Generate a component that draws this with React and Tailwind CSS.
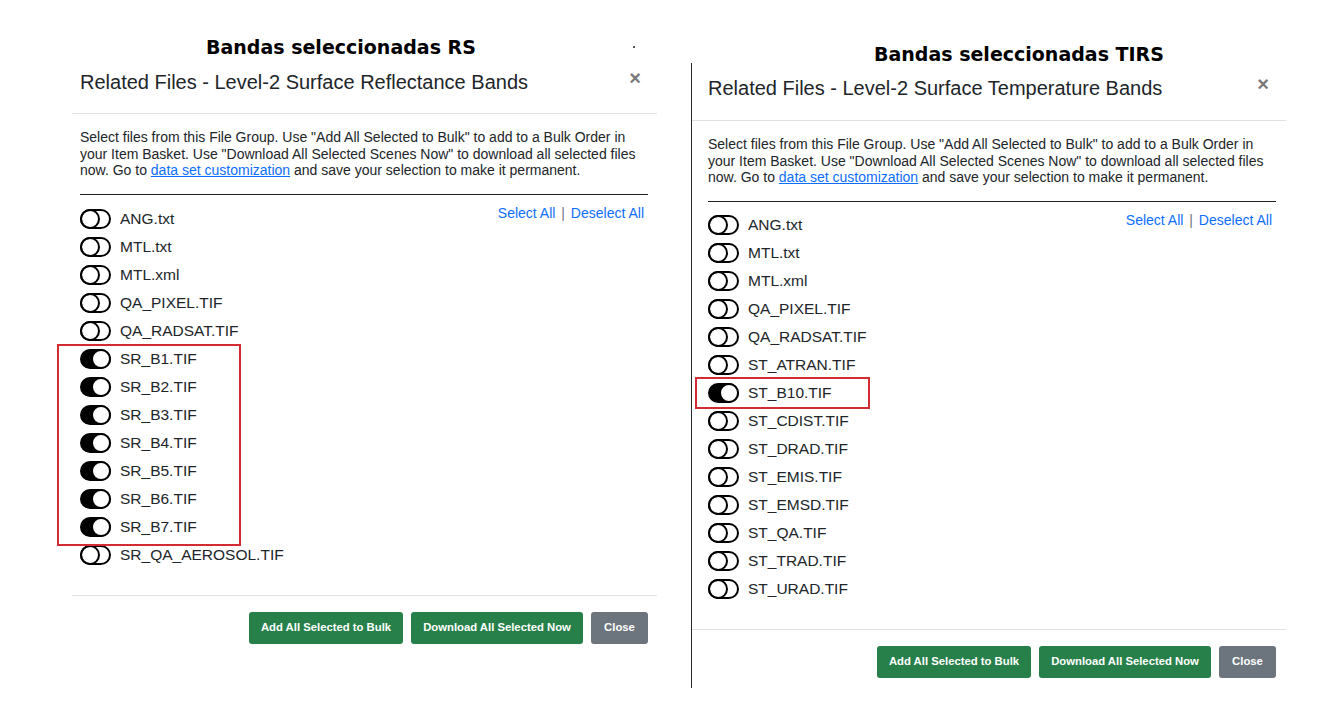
import React from "react";

const SANS = { fontFamily: '"Liberation Sans", Arial, sans-serif' };

function Toggle({ on }) {
  return on ? (
    <div className="relative w-[31px] h-[20px] rounded-full bg-black border-2 border-black shrink-0">
      <div className="absolute top-[-2px] right-[-2px] w-[20px] h-[20px] rounded-full bg-white border-2 border-black" />
    </div>
  ) : (
    <div className="relative w-[31px] h-[20px] rounded-full border-2 border-black shrink-0">
      <div className="absolute top-[-2px] left-[-2px] w-[20px] h-[20px] rounded-full border-2 border-black" />
    </div>
  );
}

function Panel({ title, items, box, pl, pr, headPr, closePt, titlePt, listMt, linksMt, bordered }) {
  return (
    <div
      className={
        "flex flex-col bg-white text-[#212529] " +
        (bordered ? "border-l border-[#2a2a2a] pb-[10px]" : "")
      }
      style={SANS}
    >
      {/* header */}
      <div className="flex justify-between h-[58px] border-b border-[#dee2e6]" style={{ paddingLeft: pl, paddingRight: headPr }}>
        <div className="text-[20px] leading-[24px]" style={{ paddingTop: titlePt }}>{title}</div>
        <div className="text-[20px] leading-[16px] font-bold text-[#7a7a7a]" style={{ paddingTop: closePt }}>×</div>
      </div>
      {/* body */}
      <div style={{ paddingLeft: pl, paddingRight: pr }}>
        <p className="pt-[15px] text-[14px] leading-[16.5px] text-[#212529]">
          Select files from this File Group. Use "Add All Selected to Bulk" to add to a Bulk Order in your Item Basket. Use "Download All Selected Scenes Now" to download all selected files now. Go to{" "}
          <a className="text-[#0d6efd] underline" href="#">data set customization</a> and save your selection to make it permanent.
        </p>
        <div className="mt-[15px] h-px bg-[#222]" />
        <div className="mb-[26px] flex justify-between" style={{ marginTop: listMt }}>
          <div className="relative flex flex-col">
            {items.map((it) => (
              <div key={it.name} className="h-[28px] flex items-center gap-[9px]">
                <Toggle on={it.on} />
                <span className="text-[15.5px] text-[#212529]">{it.name}</span>
              </div>
            ))}
            <div
              className="absolute border-2 border-[#d42a32] pointer-events-none"
              style={{ top: box.top, left: box.left, width: box.width, height: box.height }}
            />
          </div>
          <div className="text-[14px] leading-[18px] text-[#0d6efd] pr-[4px]" style={{ marginTop: linksMt }}>
            Select All <span className="text-[#6c757d] mx-[2px]">|</span> Deselect All
          </div>
        </div>
      </div>
      {/* footer */}
      <div className="border-t border-[#dee2e6] pt-[16px] flex justify-end gap-[8px]" style={{ paddingRight: pr }}>
        <button className="w-[154px] h-[32px] rounded-[3px] bg-[#27804a] text-white text-[11.3px] font-bold">Add All Selected to Bulk</button>
        <button className="w-[172px] h-[32px] rounded-[3px] bg-[#27804a] text-white text-[11.3px] font-bold">Download All Selected Now</button>
        <button className="w-[57px] h-[32px] rounded-[3px] bg-[#6c757d] text-white text-[11.3px] font-bold">Close</button>
      </div>
    </div>
  );
}

const HEAD = { fontFamily: '"DejaVu Sans", "Liberation Sans", sans-serif' };

export default function App() {
  const rs = [
    ["ANG.txt", false],
    ["MTL.txt", false],
    ["MTL.xml", false],
    ["QA_PIXEL.TIF", false],
    ["QA_RADSAT.TIF", false],
    ["SR_B1.TIF", true],
    ["SR_B2.TIF", true],
    ["SR_B3.TIF", true],
    ["SR_B4.TIF", true],
    ["SR_B5.TIF", true],
    ["SR_B6.TIF", true],
    ["SR_B7.TIF", true],
    ["SR_QA_AEROSOL.TIF", false],
  ].map(([name, on]) => ({ name, on }));
  const tirs = [
    ["ANG.txt", false],
    ["MTL.txt", false],
    ["MTL.xml", false],
    ["QA_PIXEL.TIF", false],
    ["QA_RADSAT.TIF", false],
    ["ST_ATRAN.TIF", false],
    ["ST_B10.TIF", true],
    ["ST_CDIST.TIF", false],
    ["ST_DRAD.TIF", false],
    ["ST_EMIS.TIF", false],
    ["ST_EMSD.TIF", false],
    ["ST_QA.TIF", false],
    ["ST_TRAD.TIF", false],
    ["ST_URAD.TIF", false],
  ].map(([name, on]) => ({ name, on }));

  return (
    <div className="w-[1322px] h-[718px] bg-white flex overflow-hidden">
      <div className="ml-[72px] w-[585px] flex flex-col">
        <div className="mt-[38px] h-[18px] flex items-center">
          <span className="ml-[134px] text-[19px] leading-[18px] font-bold text-black" style={HEAD}>Bandas seleccionadas RS</span>
          <span className="ml-[157px] w-[2px] h-[2px] bg-[#555]" />
        </div>
        <Panel
          title="Related Files - Level-2 Surface Reflectance Bands"
          items={rs}
          box={{ top: 139, left: -23, width: 184, height: 202 }}
          pl={8}
          pr={9}
          headPr={16}
          titlePt={14}
          closePt={14}
          listMt={10}
          linksMt={-1}
        />
      </div>
      <div className="ml-[34px] w-[595px] flex flex-col">
        <div className="mt-[45px] h-[18px] flex items-center">
          <span className="ml-[183px] text-[19px] leading-[18px] font-bold text-black" style={HEAD}>Bandas seleccionadas TIRS</span>
        </div>
        <Panel
          title="Related Files - Level-2 Surface Temperature Bands"
          items={tirs}
          box={{ top: 166, left: -13, width: 175, height: 32 }}
          pl={16}
          pr={10}
          headPr={17}
          titlePt={13}
          closePt={13}
          listMt={9}
          linksMt={0}
          bordered
        />
      </div>
    </div>
  );
}
